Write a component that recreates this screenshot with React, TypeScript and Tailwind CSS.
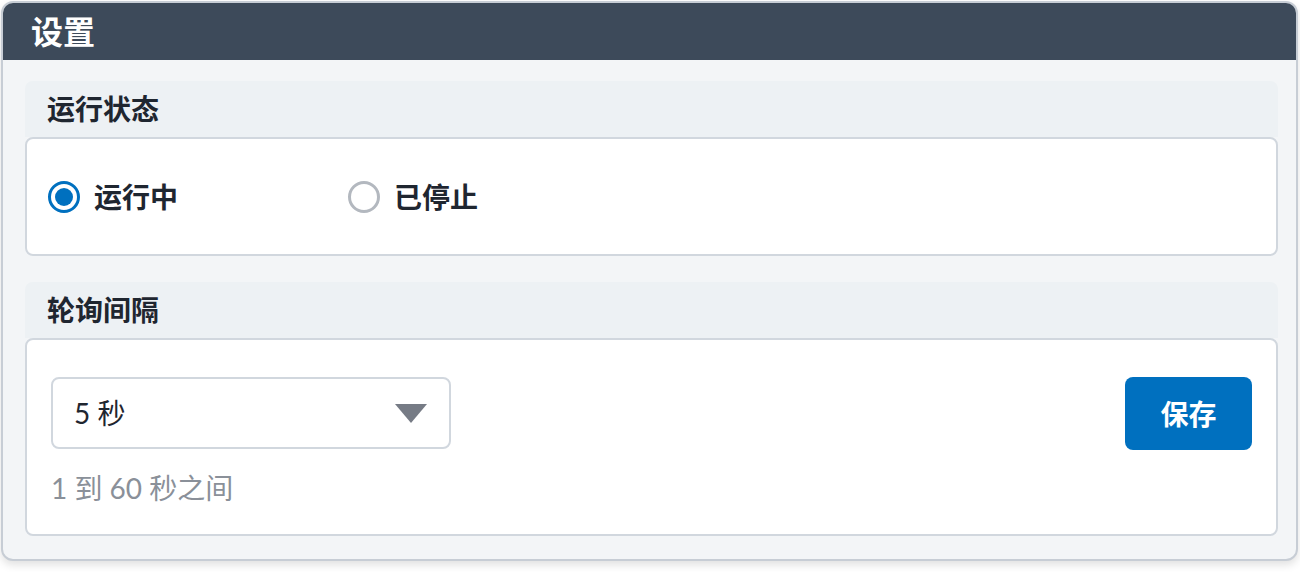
import { useState } from 'react';

type RunState = 'running' | 'stopped';

const fontStack = "font-['Lato','Noto_Sans_CJK_SC',sans-serif]";

function Radio({ checked, label, onClick }: { checked: boolean; label: string; onClick: () => void }) {
  return (
    <div onClick={onClick} className="flex w-[300px] cursor-pointer items-center gap-[14px]">
      <span
        className={`flex h-[32px] w-[32px] items-center justify-center rounded-full border-[3px] bg-white ${
          checked ? 'border-[#0070bf]' : 'border-[#b3b8bf]'
        }`}
      >
        {checked && <span className="h-[18px] w-[18px] rounded-full bg-[#0070bf]" />}
      </span>
      <span className="text-[28px] font-bold leading-none text-[#1f2630]">{label}</span>
    </div>
  );
}

function Section({ title, children }: { title: string; children: React.ReactNode }) {
  return (
    <div>
      <div className="flex h-[56px] items-center rounded-t-[8px] bg-[#edf1f4] px-[22px]">
        <h3 className="text-[28px] font-bold leading-none text-[#1f2630]">{title}</h3>
      </div>
      <div className="rounded-[8px] border-2 border-[#d1d7de] bg-white">{children}</div>
    </div>
  );
}

export default function App() {
  const [state, setState] = useState<RunState>('running');

  return (
    <div className={`${fontStack} h-[572px] w-[1300px] bg-white pl-[1px] pt-[1px]`}>
      <div className="w-[1297px] overflow-hidden rounded-[12px] border-2 border-[#c7cdd5] bg-[#f3f5f7] shadow-[0_4px_8px_rgba(0,0,0,0.12)]">
        <div className="flex h-[57px] items-center bg-[#3d4a5a] px-[28px]">
          <h2 className="text-[32px] font-bold leading-none text-white">设置</h2>
        </div>

        <div className="flex flex-col gap-[26px] pb-[23px] pl-[22px] pr-[18px] pt-[21px]">
          <Section title="运行状态">
            <div className="flex h-[115px] items-center px-[21px]">
              <Radio checked={state === 'running'} label="运行中" onClick={() => setState('running')} />
              <Radio checked={state === 'stopped'} label="已停止" onClick={() => setState('stopped')} />
            </div>
          </Section>

          <Section title="轮询间隔">
            <div className="flex h-[194px] items-start justify-between pl-[24px] pr-[24px] pt-[37px]">
              <div className="flex flex-col gap-[25px]">
                <div className="flex h-[72px] w-[400px] items-center justify-between rounded-[8px] border-2 border-[#d1d7de] bg-white pl-[21px] pr-[22px]">
                  <span className="text-[28px] text-[#1f2630]">5 秒</span>
                  <svg width="32" height="19" viewBox="0 0 32 19">
                    <polygon points="0,0 32,0 16,19" fill="#767b85" />
                  </svg>
                </div>
                <p className="text-[28px] leading-none text-[#8a9099]">1 到 60 秒之间</p>
              </div>
              <button className="h-[73px] w-[127px] rounded-[8px] bg-[#0070bf] text-[28px] font-bold text-white">
                保存
              </button>
            </div>
          </Section>
        </div>
      </div>
    </div>
  );
}
